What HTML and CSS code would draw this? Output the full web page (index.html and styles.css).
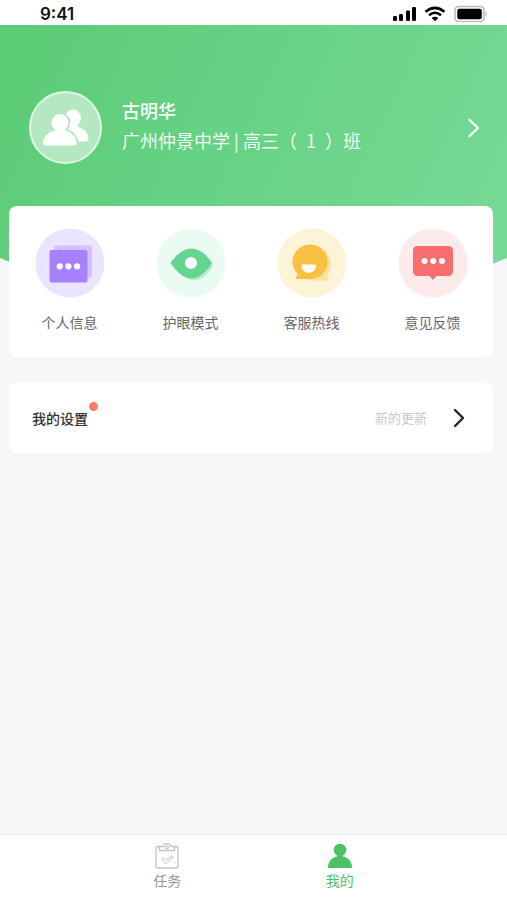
FILE: index.html
```html
<!DOCTYPE html>
<html lang="zh-CN">
<head>
<meta charset="utf-8">
<meta name="viewport" content="width=device-width, initial-scale=1">
<title>我的</title>
<link rel="stylesheet" href="styles.css">
</head>
<body>
<div class="status">
  <span class="time">9:41</span>
  <svg class="signals" width="96" height="18" viewBox="0 0 96 18" aria-hidden="true">
    <g fill="#000">
      <rect x="1" y="11" width="4" height="5" rx="1.2"/>
      <rect x="7" y="9" width="4" height="7" rx="1.2"/>
      <rect x="14" y="5.500" width="4" height="10.500" rx="1.200"/>
      <rect x="20" y="2" width="4" height="14" rx="1.200"/>
    </g>
    <g fill="none" stroke="#000" stroke-width="2.600">
      <path d="M33.500 6.800Q43 -1.200 52.500 6.800"/>
      <path d="M37 10.300Q43 5.200 49 10.300"/>
    </g>
    <path d="M39.600 13Q43 10.300 46.400 13L43 16.200Z" fill="#000"/>
    <rect x="63" y="1.500" width="29" height="15" rx="3.500" fill="#fff" stroke="#bbb" stroke-width="1.600"/>
    <rect x="65.300" y="3.800" width="24.500" height="10.400" rx="2" fill="#000"/>
    <path d="M93.500 6.500Q95.500 9 93.500 11.500Z" fill="#aaa"/>
  </svg>
</div>

<header class="hero">
  <a class="profile" href="#profile">
    <span class="avatar">
      <svg width="48" height="40" viewBox="0 0 48 40" aria-hidden="true">
        <g fill="#fff">
          <ellipse cx="31" cy="10" rx="8" ry="8.500"/>
          <path d="M26 12H36V19C42 20.500 46.500 25 46.500 31Q46.500 33.500 44 33.500H26Z"/>
        </g>
        <path d="M13.500 22Q9.500 19 9.500 14.500A8.500 8.500 0 0 1 26.500 14.500Q26.500 19 22.500 22C29 23.500 34 28 34.500 34.500Q34.500 37.500 32 37.500H3.500Q1 37.500 1 34.500C1.500 28 7 23.500 13.500 22Z" fill="#fff" stroke="#b3e8c2" stroke-width="3.600" paint-order="stroke"/>
      </svg>
    </span>
    <span class="who">
      <strong class="name">古明华</strong>
      <span class="school">广州仲景中学 | 高三（&ensp;1&ensp;）班</span>
    </span>
    <svg width="14" height="20" viewBox="0 0 14 20" fill="none" stroke="#fff" stroke-width="2.400" stroke-linecap="round" stroke-linejoin="round" aria-hidden="true"><path d="M2.500 2L11 10 2.500 18"/></svg>
  </a>
</header>

<main class="content">
  <nav class="card shortcuts">
    <a class="shortcut" href="#info">
      <svg width="70" height="70" viewBox="0 0 70 70" aria-hidden="true">
        <circle cx="35" cy="35" r="34.500" fill="#ebe4fe"/>
        <rect x="19" y="17.500" width="38" height="32" rx="2" fill="#d3c0fd"/>
        <rect x="14.500" y="22" width="38" height="32.500" rx="2" fill="#a780fb"/>
        <g fill="#fff"><circle cx="24.700" cy="38.300" r="3.100"/><circle cx="33.400" cy="38.300" r="3.100"/><circle cx="42.100" cy="38.300" r="3.100"/></g>
      </svg>
      <span>个人信息</span>
    </a>
    <a class="shortcut" href="#eyes">
      <svg width="70" height="70" viewBox="0 0 70 70" aria-hidden="true">
        <circle cx="35" cy="35" r="34.500" fill="#eafcf1"/>
        <path d="M19 38C29 20 46 20 57 37.500C47 57 31 57 19 38Z" fill="#b9eccc"/>
        <path d="M14.500 35C28 15.500 43 15.500 56 35C43 55.500 28 55.500 14.500 35Z" fill="#64d591"/>
        <circle cx="35" cy="35" r="6" fill="#fff"/>
      </svg>
      <span>护眼模式</span>
    </a>
    <a class="shortcut" href="#hotline">
      <svg width="70" height="70" viewBox="0 0 70 70" aria-hidden="true">
        <circle cx="35" cy="35" r="34.500" fill="#fcf4d7"/>
        <path d="M48 22Q59 36 50 48L52 52.500H35L22 50Z" fill="#f9e29f"/>
        <path d="M32 16.500A17.300 17.300 0 1 1 32 51H18.500L20.500 46A17.300 17.300 0 0 1 32 16.500Z" fill="#f9c144"/>
        <path d="M24.500 38Q24.500 36.500 26 36.500H37.500Q39 36.500 39 38C38.500 47 25 47 24.500 38Z" fill="#fff"/>
      </svg>
      <span>客服热线</span>
    </a>
    <a class="shortcut" href="#feedback">
      <svg width="70" height="70" viewBox="0 0 70 70" aria-hidden="true">
        <circle cx="35" cy="35" r="34.500" fill="#fdeaea"/>
        <path d="M20 18H50Q55 18 55 23V43Q55 48 50 48H38.500L35 52 31.500 48H20Q15 48 15 43V23Q15 18 20 18Z" fill="#f76e6c"/>
        <g fill="#fff"><circle cx="26.500" cy="33" r="3"/><circle cx="35.200" cy="33" r="3"/><circle cx="43.900" cy="33" r="3"/></g>
      </svg>
      <span>意见反馈</span>
    </a>
  </nav>

  <a class="card settings" href="#settings">
    <span class="settings-title">我的设置<i class="dot"></i></span>
    <span class="hint">新的更新</span>
    <svg width="14" height="20" viewBox="0 0 14 20" fill="none" stroke="#222" stroke-width="2.400" stroke-linecap="round" stroke-linejoin="round" aria-hidden="true"><path d="M3 2L11 10 3 18"/></svg>
  </a>
</main>

<nav class="tabs">
  <a class="tab" href="#tasks">
    <svg width="26" height="26" viewBox="0 0 26 26" fill="none" stroke="#c4c4c4" stroke-width="1.300" stroke-linejoin="round" aria-hidden="true">
      <path d="M5.500 3.500H4Q2 3.500 2 5.500V23Q2 25 4 25H22Q24 25 24 23V5.500Q24 3.500 22 3.500H20.500"/>
      <path d="M5.500 3.500V7.500H20.500V3.500H17Q16 .7 13 .7T9 3.500Z"/>
      <circle cx="13" cy="4.300" r="1.500"/>
      <path d="M7.500 16L9 14.500 12 17.500 17.500 12.500 19 14 12 20.800Z" stroke-width="1"/>
    </svg>
    <span>任务</span>
  </a>
  <a class="tab active" href="#me" aria-current="page">
    <svg width="26" height="26" viewBox="0 0 26 26" fill="#4cc268" aria-hidden="true">
      <circle cx="13" cy="7" r="6.300"/>
      <path d="M10 11H16V13.500C22 14.500 25 19 25 25H1C1 19 4 14.500 10 13.500Z"/>
    </svg>
    <span>我的</span>
  </a>
</nav>
</body>
</html>
```
FILE: styles.css
```css
* {
  box-sizing: border-box;
}

body {
  margin: 0;
  min-height: 100vh;
  display: flex;
  flex-direction: column;
  background: #f6f7f9;
  font-family: "Noto Sans CJK SC", sans-serif;
  color: #666;
}

a {
  color: inherit;
  text-decoration: none;
}

svg {
  display: block;
  flex: none;
}

.status {
  display: flex;
  align-items: center;
  justify-content: space-between;
  height: 25px;
  padding: 2px 19px 0 40px;
  background: #fff;
}

.time {
  font: 600 17px/24px Inter, sans-serif;
  color: #111;
}

.hero {
  padding: 66px 26px 118px 29px;
  background: linear-gradient(115deg, #5bcb75, #68d387 50%, #78da96);
  clip-path: polygon(0 0, 100% 0, 100% calc(100% - 24px), calc(100% - 60px) 100%, 60px 100%, 0 calc(100% - 24px));
}

.profile {
  display: flex;
  align-items: center;
  color: #fff;
}

.avatar {
  display: flex;
  align-items: center;
  justify-content: center;
  width: 73px;
  height: 73px;
  border: 2px solid #e0f7e6;
  border-radius: 50%;
  background: #b3e8c2;
}

.who {
  display: flex;
  flex-direction: column;
  flex: 1;
  margin-left: 20px;
  padding-bottom: 5px;
  font-size: 18px;
  line-height: 30px;
}

.name {
  font-weight: 500;
}

.school {
  font-weight: 400;
  color: #f0fbf2;
}

.content {
  flex: 1;
  margin-top: -76px;
  padding: 0 14px 24px 9px;
  position: relative;
}

.card {
  display: flex;
  border-radius: 8px;
  background: #fff;
}

.shortcuts {
  padding: 22px 0 24px;
}

.shortcut {
  flex: 1;
  display: flex;
  flex-direction: column;
  align-items: center;
  gap: 13px;
  font-size: 14px;
  line-height: 22px;
}

.settings {
  align-items: center;
  margin-top: 26px;
  padding: 24px 27px 24px 23px;
  line-height: 22px;
}

.settings-title {
  position: relative;
  margin-right: auto;
  font-size: 14px;
  font-weight: 500;
  color: #333;
}

.dot {
  position: absolute;
  top: -5px;
  right: -10px;
  width: 9px;
  height: 9px;
  border-radius: 50%;
  background: #fb7d60;
}

.hint {
  margin-right: 25px;
  font-size: 13px;
  color: #c8c8c8;
}

.tabs {
  display: flex;
  justify-content: center;
  padding: 8px 0 10px;
  border-top: 1px solid #ececee;
  background: #fff;
}

.tab {
  display: flex;
  flex-direction: column;
  align-items: center;
  gap: 1px;
  width: 34%;
  font-size: 14px;
  line-height: 20px;
  color: #999;
}

.active {
  color: #4cc268;
}
```
